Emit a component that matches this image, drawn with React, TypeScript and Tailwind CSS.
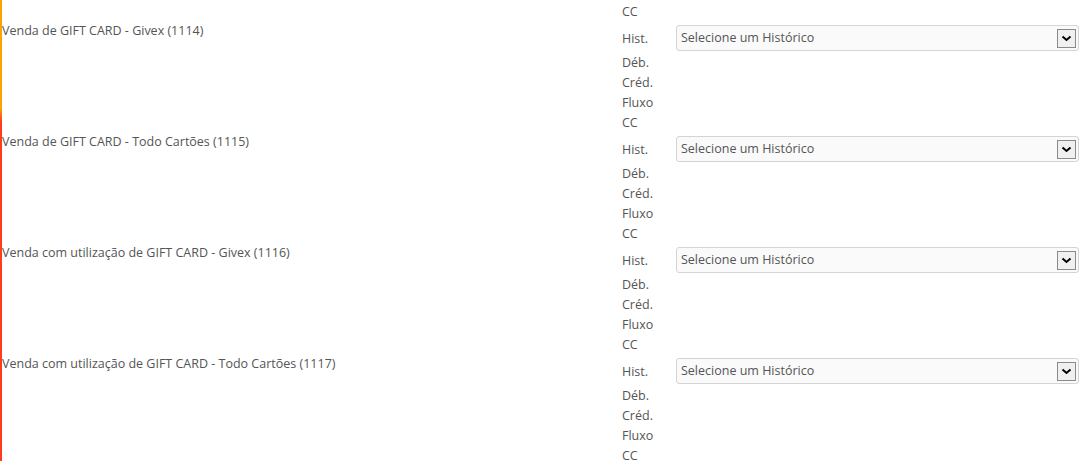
import React from "react";

const rows = [
  "Venda de GIFT CARD - Givex (1114)",
  "Venda de GIFT CARD - Todo Cartões (1115)",
  "Venda com utilização de GIFT CARD - Givex (1116)",
  "Venda com utilização de GIFT CARD - Todo Cartões (1117)",
];

function HistSelect() {
  return (
    <div className="flex h-[26px] w-[403px] items-center justify-between rounded-[3px] border border-[#d4d4d4] bg-[#fafafa] pl-[4px] pr-[2px]">
      <span className="pt-[1px]">Selecione um Histórico</span>
      <span className="flex h-[19px] w-[19px] items-center justify-center border border-[#8a8a8a] bg-[#f0f0f0]">
        <svg width="11" height="7" viewBox="0 0 11 7">
          <path d="M1.5 1.5 L5.5 5 L9.5 1.5" fill="none" stroke="#000" strokeWidth="2" />
        </svg>
      </span>
    </div>
  );
}

function Row({ label }: { label: string }) {
  return (
    <div className="flex h-[111px]">
      <div className="w-[620px] pt-[1px] leading-[20px]">{label}</div>
      <div className="flex flex-col pt-[5px]">
        <div className="flex h-[26px] items-center">
          <span className="w-[54px] pt-[2px]">Hist.</span>
          <HistSelect />
        </div>
        <div className="mt-[2px] leading-[20px]">
          <div>Déb.</div>
          <div>Créd.</div>
          <div>Fluxo</div>
          <div>CC</div>
        </div>
      </div>
    </div>
  );
}

export default function App() {
  return (
    <div className="flex h-[461px] overflow-hidden bg-white font-['Open_Sans',sans-serif] text-[12.5px] text-[#555]">
      <div className="w-[2px] shrink-0 bg-[linear-gradient(to_bottom,#f9a602_0px,#f9a602_108px,#ff3c1e_122px,#ff3c1e_100%)]" />
      <div className="flex-1">
        <div className="flex h-[20px]">
          <div className="w-[620px]" />
          <div className="pt-[2px] leading-[20px]">CC</div>
        </div>
        {rows.map((r) => (
          <Row key={r} label={r} />
        ))}
      </div>
    </div>
  );
}
